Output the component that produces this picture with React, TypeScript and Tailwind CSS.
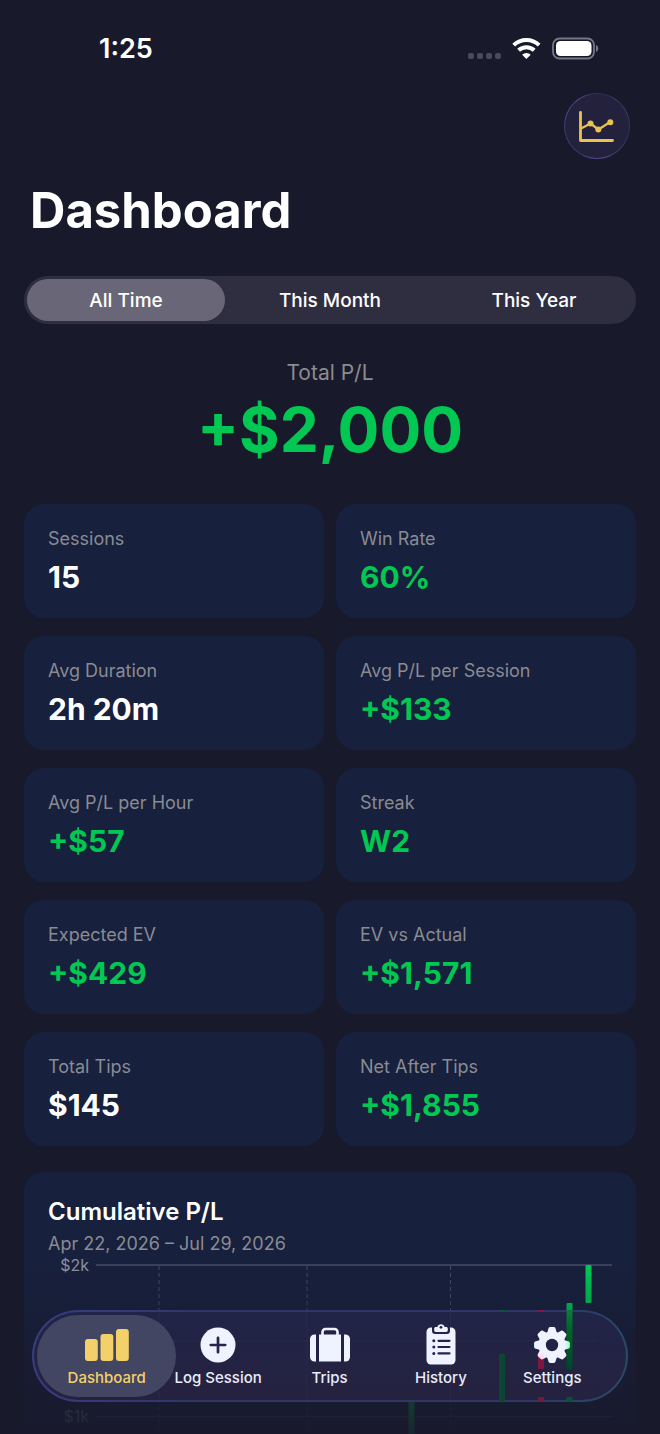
import React, { useState } from 'react';

const ranges = ['All Time', 'This Month', 'This Year'];

const stats = [
  { label: 'Sessions', value: '15', positive: false },
  { label: 'Win Rate', value: '60%', positive: true },
  { label: 'Avg Duration', value: '2h 20m', positive: false },
  { label: 'Avg P/L per Session', value: '+$133', positive: true },
  { label: 'Avg P/L per Hour', value: '+$57', positive: true },
  { label: 'Streak', value: 'W2', positive: true },
  { label: 'Expected EV', value: '+$429', positive: true },
  { label: 'EV vs Actual', value: '+$1,571', positive: true },
  { label: 'Total Tips', value: '$145', positive: false },
  { label: 'Net After Tips', value: '+$1,855', positive: true },
];

const StatusBar: React.FC = () => (
  <div className="flex items-start justify-between pt-8 pb-[27px] pl-[99px] pr-[61px]">
    <span className="text-[27px] leading-[34px] font-semibold">1:25</span>
    <svg width="132" height="34" viewBox="0 0 132 34" aria-hidden="true">
      <g fill="#4b4a5c">
        <rect x="1" y="21" width="6" height="6" rx="2" />
        <rect x="10" y="21" width="6" height="6" rx="2" />
        <rect x="19" y="21" width="6" height="6" rx="2" />
        <rect x="28" y="21" width="6" height="6" rx="2" />
      </g>
      <g fill="none" stroke="#fff" strokeWidth="4">
        <path d="M46.7 13.1a18.2 18.2 0 0 1 25.4 0" />
        <path d="M51.6 18.3a11.2 11.2 0 0 1 15.6 0" />
      </g>
      <path d="M59.4 27l-4.3-4.200a6.1 6.1 0 0 1 8.6 0z" fill="#fff" />
      <rect x="86" y="6.500" width="41" height="20" rx="6.500" fill="none" stroke="#777684" strokeWidth="1.800" />
      <rect x="89" y="9" width="35.500" height="15" rx="4.500" fill="#fff" />
      <path d="M129 13c1.400.6 2.200 1.900 2.200 3.500s-.8 2.900-2.200 3.500z" fill="#777684" />
    </svg>
  </div>
);

const ChartIcon: React.FC = () => (
  <svg width="36" height="32" viewBox="1 -1 36 32" fill="none" stroke="#e9c251" strokeLinecap="round" strokeLinejoin="round" aria-hidden="true">
    <path d="M2.500 1.500v28h32" strokeWidth="2.800" />
    <path d="M3 17.500l9.500-5 8 6 12-7.700" strokeWidth="2.200" />
    <g fill="#e9c251" stroke="none">
      <circle cx="12.500" cy="12.500" r="3" />
      <circle cx="20.300" cy="18.500" r="3" />
      <circle cx="32.300" cy="11.200" r="3" />
    </g>
  </svg>
);

const ProfitChart: React.FC = () => (
  <svg viewBox="0 0 564 260" className="block w-full" role="img" aria-label="Cumulative profit and loss">
    <g stroke="#454b62" strokeWidth="1.500">
      <path d="M48 9h516M48 85h516M48 160.500h516M48 236.500h516" />
      <path d="M111 10v250M259 10v250M402.500 10v250" strokeWidth="1" strokeDasharray="4 3" />
    </g>
    <g fill="#8d91a0" fontSize="16" textAnchor="end">
      <text x="41" y="15">$2k</text>
      <text x="41" y="91">$1.5k</text>
      <text x="41" y="166">$1k</text>
    </g>
    <g fill="#00c853">
      <rect x="537.500" y="9" width="6" height="38" rx="1" />
      <rect x="518.500" y="47" width="6" height="76" rx="1" />
      <rect x="451" y="80" width="6" height="62" rx="1" />
      <rect x="360.500" y="120" width="6" height="90" rx="1" />
    </g>
  </svg>
);

const BarsIcon: React.FC = () => (
  <svg width="44" height="44" viewBox="0 0 44 44" fill="#f4d06a" aria-hidden="true">
    <rect x="0" y="16" width="12.800" height="22" rx="3" />
    <rect x="15.500" y="11" width="12.800" height="27" rx="3" />
    <rect x="31" y="6" width="12.800" height="32" rx="3" />
  </svg>
);

const PlusIcon: React.FC = () => (
  <svg width="44" height="44" viewBox="0 0 44 44" aria-hidden="true">
    <circle cx="22" cy="22" r="17.500" fill="#eff3ff" />
    <path d="M22 14.800v14.400M14.800 22h14.400" stroke="#22244a" strokeWidth="2.700" strokeLinecap="round" />
  </svg>
);

const SuitcaseIcon: React.FC = () => (
  <svg width="44" height="44" viewBox="0 0 44 44" fill="#eff3ff" aria-hidden="true">
    <path d="M8 11.500v27H6.500a4.500 4.500 0 0 1-4.500-4.500V16a4.500 4.500 0 0 1 4.500-4.500z" />
    <path d="M36 11.500v27h1.500a4.500 4.500 0 0 0 4.500-4.500V16a4.500 4.500 0 0 0-4.500-4.500z" />
    <path d="M11 11.500h22v27H11z" />
    <path d="M14.500 12V9a3 3 0 0 1 3-3h9a3 3 0 0 1 3 3v3" fill="none" stroke="#eff3ff" strokeWidth="2.600" />
  </svg>
);

const ClipboardIcon: React.FC = () => (
  <svg width="44" height="44" viewBox="0 0 44 44" aria-hidden="true">
    <rect x="7.500" y="4.500" width="29" height="37" rx="4.500" fill="#eff3ff" />
    <path d="M13 3.500v4.300a3.300 3.300 0 0 0 3.300 3.300h11.400a3.300 3.300 0 0 0 3.300-3.300V3.500z" fill="#22244a" />
    <path d="M15.200 5.600c0-1 .7-1.600 1.600-1.600h1.600a3.700 3.700 0 0 1 7.200 0h1.600c.9 0 1.600.6 1.600 1.600v1.600c0 1-.7 1.700-1.600 1.700H16.800c-.9 0-1.600-.7-1.600-1.700z" fill="#eff3ff" />
    <g fill="#22244a">
      <circle cx="22" cy="4.300" r="1.400" />
      <circle cx="14.800" cy="17.800" r="1.500" />
      <circle cx="14.800" cy="24" r="1.500" />
      <circle cx="14.800" cy="30.400" r="1.500" />
    </g>
    <path d="M19.500 17.800h11M19.500 24h11M19.500 30.400h11" stroke="#22244a" strokeWidth="2.200" strokeLinecap="round" />
  </svg>
);

const teeth = [0, 45, 90, 135, 180, 225, 270, 315];

const GearIcon: React.FC = () => (
  <svg width="44" height="44" viewBox="0 0 44 44" aria-hidden="true">
    <defs>
      <linearGradient id="gear-mint" x1="0" x2="1">
        <stop offset="0" stopColor="#8dfcc4" stopOpacity="0" />
        <stop offset="0.500" stopColor="#8dfcc4" stopOpacity="0.900" />
        <stop offset="1" stopColor="#8dfcc4" stopOpacity="0.500" />
      </linearGradient>
      <mask id="gear-shape">
        <circle cx="22" cy="22" r="13.600" fill="#fff" />
        {teeth.map((angle) => (
          <path
            key={angle}
            d="M16.800 11l1.500-5c.4-1.300 1-1.900 2-1.900h3.400c1 0 1.600.6 2 1.900l1.500 5z"
            transform={`rotate(${angle} 22 22)`}
            fill="#fff"
          />
        ))}
        <circle cx="22" cy="22" r="6.200" fill="#000" />
      </mask>
    </defs>
    <g mask="url(#gear-shape)">
      <rect width="44" height="44" fill="#eff3ff" />
      <rect x="35" y="4" width="8" height="34" fill="url(#gear-mint)" />
      <rect x="8" y="31" width="6" height="9" fill="#ffdcf0" />
    </g>
  </svg>
);

const tabs = [
  { label: 'Dashboard', Icon: BarsIcon },
  { label: 'Log Session', Icon: PlusIcon },
  { label: 'Trips', Icon: SuitcaseIcon },
  { label: 'History', Icon: ClipboardIcon },
  { label: 'Settings', Icon: GearIcon },
];

// Chart colours bleeding through the glass of the tab bar
const GlassReflections: React.FC = () => (
  <svg viewBox="0 0 596 92" preserveAspectRatio="none" className="absolute -inset-0.5 w-[calc(100%+4px)] h-[calc(100%+4px)]" aria-hidden="true">
    <defs>
      <filter id="glass-soft" x="-50%" y="-10%" width="200%" height="120%">
        <feGaussianBlur stdDeviation="0.700" />
      </filter>
      <linearGradient id="glass-bar" x1="0" y1="0" x2="0" y2="1">
        <stop offset="0" stopColor="#087a3a" />
        <stop offset="0.450" stopColor="#045f24" />
        <stop offset="1" stopColor="#05442f" />
      </linearGradient>
    </defs>
    <path d="M127 2v88M275 2v88M418.500 2v88M36 31h528" stroke="#fff" strokeOpacity="0.030" />
    <g filter="url(#glass-soft)">
      <rect x="534.500" y="0" width="6" height="59" fill="url(#glass-bar)" />
      <rect x="467" y="44" width="6" height="47" fill="#0a4435" />
      <rect x="506" y="46" width="6" height="13" fill="#7d183f" />
    </g>
    <rect x="467" y="0" width="6" height="1.500" fill="#08583d" />
    <rect x="506" y="0" width="6" height="1.500" fill="#8b1742" />
    <rect x="506" y="87" width="6" height="4" fill="#701a3f" />
    <rect x="534.500" y="87" width="6" height="4" fill="#07503a" />
  </svg>
);

export default function App() {
  const [range, setRange] = useState('All Time');
  const [tab, setTab] = useState('Dashboard');

  return (
    <div className="relative h-screen overflow-hidden bg-[#19192c] text-white font-[Inter,'Liberation_Sans',sans-serif]">
      <main className="h-full overflow-y-auto [scrollbar-width:none]">
        <StatusBar />

        <div className="flex justify-end pr-[30px]">
          <button
            type="button"
            aria-label="Charts"
            className="flex size-[66px] items-center justify-center rounded-full border border-transparent [background:linear-gradient(#23213b,#23213b)_padding-box,linear-gradient(60deg,#2f2d4e,#4c478f_30%,#4c478f_45%,#302e50_75%,#4c478f)_border-box]"
          >
            <ChartIcon />
          </button>
        </div>

        <div className="px-6">
          <h1 className="mt-[22px] px-1.5 text-[49px] leading-[60px] font-bold">Dashboard</h1>

          <div className="mt-[35px] grid grid-cols-3 gap-1.5 rounded-full bg-[#2f2e41] p-[3px]">
            {ranges.map((item) => (
              <button
                key={item}
                type="button"
                aria-pressed={range === item}
                onClick={() => setRange(item)}
                className={`h-[42px] rounded-full pt-0.5 text-[19px] font-medium ${range === item ? 'bg-[#696777]' : ''}`}
              >
                {item}
              </button>
            ))}
          </div>

          <section className="mt-[33px] text-center">
            <h2 className="text-[21px] leading-8 text-[#8b8b92]">Total P/L</h2>
            <p className="text-[62px] leading-[82px] font-bold text-[#00c853]">+$2,000</p>
          </section>

          <section className="mt-[33px] grid grid-cols-2 gap-x-3 gap-y-[18px]">
            {stats.map((stat) => (
              <div key={stat.label} className="rounded-[20px] bg-[#17203c] px-6 py-[23px]">
                <h3 className="text-[18px] leading-6 text-[#8a8b93]">{stat.label}</h3>
                <p className={`mt-2 text-[30px] leading-9 font-bold ${stat.positive ? 'text-[#00c853]' : 'text-white'}`}>
                  {stat.value}
                </p>
              </div>
            ))}
          </section>

          <section className="mt-[26px] rounded-[20px] bg-[#17203c] px-6 pt-6 pb-10">
            <h2 className="text-[24px] leading-8 font-semibold">Cumulative P/L</h2>
            <p className="mt-1 text-[18px] leading-6 text-[#8a8b93]">Apr 22, 2026 – Jul 29, 2026</p>
            <ProfitChart />
          </section>
        </div>
      </main>

      <div className="pointer-events-none absolute inset-x-0 bottom-0 h-[170px] bg-[linear-gradient(to_bottom,transparent,rgba(25,25,44,0.22)_24%,rgba(25,25,44,0.82)_82%,rgba(25,25,44,0.92))]"></div>

      <nav className="absolute inset-x-8 bottom-8 flex h-[92px] rounded-full border-2 border-transparent pr-[18px] pl-[17px] [background:linear-gradient(#202447,#25223f)_padding-box,linear-gradient(100deg,#363e82,#2f3569_30%,#2f3569_85%,#284c66)_border-box]">
        <GlassReflections />
        {tabs.map(({ label, Icon }) => (
          <button
            key={label}
            type="button"
            onClick={() => setTab(label)}
            className={`relative flex flex-1 flex-col items-center gap-px pt-[11px] text-[15px] leading-5 font-medium whitespace-nowrap ${tab === label ? 'text-[#f4d06a]' : 'text-[#e9ecfa]'}`}
          >
            {tab === label && <span className="absolute -inset-x-3.5 inset-y-[3px] rounded-full bg-[#434663]"></span>}
            <span className="relative"><Icon /></span>
            <span className="relative">{label}</span>
          </button>
        ))}
      </nav>
    </div>
  );
}
